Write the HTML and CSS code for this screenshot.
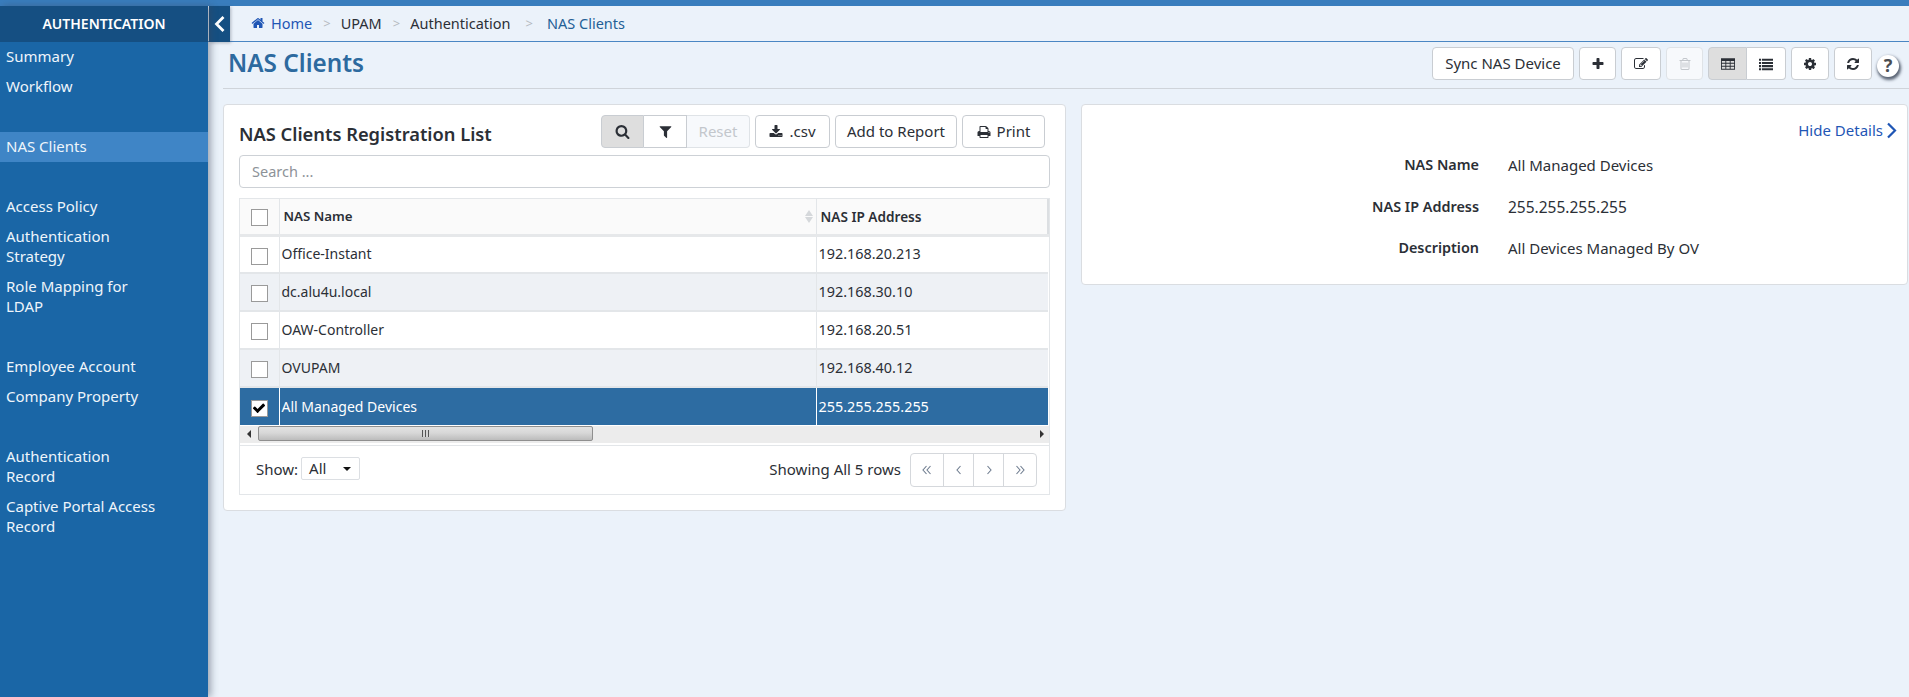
FILE: index.html
```html
<!DOCTYPE html>
<html lang="en">
<head>
<meta charset="utf-8">
<title>NAS Clients</title>
<link rel="stylesheet" href="styles.css">
</head>
<body>
<svg class="defs" width="0" height="0">
  <symbol id="i-home" viewBox="0 0 1792 1792"><path d="M1472 992v480q0 26-19 45t-45 19h-384v-384h-256v384h-384q-26 0-45-19t-19-45v-480q0-1 .5-3t.5-3l575-474 575 474q1 2 1 6zm223-69l-62 74q-8 9-21 11h-3q-13 0-21-7l-692-577-692 577q-12 8-24 7-13-2-21-11l-62-74q-8-10-7-23.5t11-21.5l719-599q32-26 76-26t76 26l244 204v-195q0-14 9-23t23-9h192q14 0 23 9t9 23v408l219 182q10 8 11 21.5t-7 23.5z"/></symbol>
  <symbol id="i-search" viewBox="0 0 1792 1792"><path d="M1216 832q0-185-131.5-316.5t-316.5-131.5-316.5 131.5-131.5 316.5 131.5 316.5 316.5 131.5 316.5-131.5 131.5-316.5zm512 832q0 52-38 90t-90 38q-54 0-90-38l-343-342q-179 124-399 124-143 0-273.5-55.5t-225-150-150-225-55.5-273.5 55.5-273.5 150-225 225-150 273.5-55.5 273.5 55.5 225 150 150 225 55.5 273.5q0 220-124 399l343 343q37 37 37 90z"/></symbol>
  <symbol id="i-filter" viewBox="0 0 1792 1792"><path d="M1595 295q17 41-14 70l-493 493v742q0 42-39 59-13 5-25 5-27 0-45-19l-256-256q-19-19-19-45v-486l-493-493q-31-29-14-70 17-39 59-39h1280q42 0 59 39z"/></symbol>
  <symbol id="i-plus" viewBox="0 0 1792 1792"><path d="M1600 736v192q0 40-28 68t-68 28h-416v416q0 40-28 68t-68 28h-192q-40 0-68-28t-28-68v-416h-416q-40 0-68-28t-28-68v-192q0-40 28-68t68-28h416v-416q0-40 28-68t68-28h192q40 0 68 28t28 68v416h416q40 0 68 28t28 68z"/></symbol>
  <symbol id="i-check" viewBox="0 0 1792 1792"><path d="M1671 566q0 40-28 68l-724 724-136 136q-28 28-68 28t-68-28l-136-136-362-362q-28-28-28-68t28-68l136-136q28-28 68-28t68 28l294 295 656-657q28-28 68-28t68 28l136 136q28 28 28 68z"/></symbol>
  <symbol id="i-cog" viewBox="0 0 1792 1792"><path d="M1152 896q0-106-75-181t-181-75-181 75-75 181 75 181 181 75 181-75 75-181zm512-109v222q0 12-8 23t-20 13l-185 28q-19 54-39 91 35 50 107 138 10 12 10 25t-9 23q-27 37-99 108t-94 71q-12 0-26-9l-138-108q-44 23-91 38-16 136-29 186-7 28-36 28h-222q-14 0-24.5-8.5t-11.5-21.5l-28-184q-49-16-90-37l-141 107q-10 9-25 9-14 0-25-11-126-114-165-168-7-10-7-23 0-12 8-23 15-21 51-66.5t54-70.5q-27-50-41-99l-183-27q-13-2-21-12.5t-8-23.5v-222q0-12 8-23t19-13l186-28q14-46 39-92-40-57-107-138-10-12-10-24 0-10 9-23 26-36 98.5-107.5t94.5-71.5q13 0 26 10l138 107q44-23 91-38 16-136 29-186 7-28 36-28h222q14 0 24.5 8.5t11.5 21.5l28 184q49 16 90 37l142-107q9-9 24-9 13 0 25 10 129 119 165 170 7 8 7 22 0 12-8 23-15 21-51 66.5t-54 70.5q26 50 41 98l183 28q13 2 21 12.5t8 23.5z"/></symbol>
  <symbol id="i-refresh" viewBox="0 0 1792 1792"><path d="M1639 1056q0 5-1 7-64 268-268 434.5t-478 166.5q-146 0-282.5-55t-243.5-157l-129 129q-19 19-45 19t-45-19-19-45v-448q0-26 19-45t45-19h448q26 0 45 19t19 45-19 45l-137 137q71 66 161 102t187 36q134 0 250-65t186-179q11-17 53-117 8-23 30-23h192q13 0 22.5 9.5t9.5 22.5zm25-800v448q0 26-19 45t-45 19h-448q-26 0-45-19t-19-45 19-45l138-138q-148-137-349-137-134 0-250 65t-186 179q-11 17-53 117-8 23-30 23h-199q-13 0-22.5-9.5t-9.5-22.5v-7q65-268 270-434.5t480-166.5q146 0 284 55.5t245 156.5l130-129q19-19 45-19t45 19 19 45z"/></symbol>
  <symbol id="i-download" viewBox="0 0 1792 1792"><path d="M1344 1344q0-26-19-45t-45-19-45 19-19 45 19 45 45 19 45-19 19-45zm256 0q0-26-19-45t-45-19-45 19-19 45 19 45 45 19 45-19 19-45zm128-224v320q0 40-28 68t-68 28h-1472q-40 0-68-28t-28-68v-320q0-40 28-68t68-28h465l135 136q58 56 136 56t136-56l136-136h464q40 0 68 28t28 68zm-325-569q17 41-14 70l-448 448q-18 19-45 19t-45-19l-448-448q-31-29-14-70 17-39 59-39h256v-448q0-26 19-45t45-19h256q26 0 45 19t19 45v448h256q42 0 59 39z"/></symbol>
  <symbol id="i-print" viewBox="0 0 1792 1792"><path d="M448 1536h896v-256h-896v256zm0-640h896v-384h-160q-40 0-68-28t-28-68v-160h-640v640zm1152 64q0-26-19-45t-45-19-45 19-19 45 19 45 45 19 45-19 19-45zm128 0v416q0 13-9.5 22.5t-22.5 9.5h-224v160q0 40-28 68t-68 28h-960q-40 0-68-28t-28-68v-160h-224q-13 0-22.5-9.5t-9.5-22.5v-416q0-79 56.5-135.5t135.5-56.5h64v-544q0-40 28-68t68-28h672q40 0 88 20t76 48l152 152q28 28 48 76t20 88v256h64q79 0 135.5 56.5t56.5 135.5z"/></symbol>
  <symbol id="i-edit" viewBox="0 0 1792 1792"><path d="M888 1184l116-116-152-152-116 116v56h96v96h56zm440-720q-16-16-33 1l-350 350q-17 17-1 33t33-1l350-350q17-17 1-33zm80 594v190q0 119-84.5 203.5t-203.5 84.5h-832q-119 0-203.5-84.5t-84.5-203.5v-832q0-119 84.5-203.5t203.5-84.5h832q63 0 117 25 15 7 18 23 3 17-9 29l-49 49q-14 14-32 8-23-6-45-6h-832q-66 0-113 47t-47 113v832q0 66 47 113t113 47h832q66 0 113-47t47-113v-126q0-13 9-22l64-64q15-15 35-7t20 29zm-96-738l288 288-672 672h-288v-288zm444 132l-92 92-288-288 92-92q28-28 68-28t68 28l152 152q28 28 28 68t-28 68z"/></symbol>
  <symbol id="i-trash" viewBox="0 0 1792 1792"><path d="M704 736v576q0 14-9 23t-23 9h-64q-14 0-23-9t-9-23v-576q0-14 9-23t23-9h64q14 0 23 9t9 23zm256 0v576q0 14-9 23t-23 9h-64q-14 0-23-9t-9-23v-576q0-14 9-23t23-9h64q14 0 23 9t9 23zm256 0v576q0 14-9 23t-23 9h-64q-14 0-23-9t-9-23v-576q0-14 9-23t23-9h64q14 0 23 9t9 23zm128 724v-948h-896v948q0 22 7 40.5t14.5 27 10.5 8.5h832q3 0 10.5-8.5t14.5-27 7-40.5zm-672-1076h448l-48-117q-7-9-17-11h-317q-10 2-17 11zm928 32v64q0 14-9 23t-23 9h-96v948q0 83-47 143.5t-113 60.5h-832q-66 0-113-59t-47-142v-952h-96q-14 0-23-9t-9-23v-64q0-14 9-23t23-9h309l70-167q15-37 54-63t79-26h320q40 0 79 26t54 63l70 167h309q14 0 23 9t9 23z"/></symbol>
  <symbol id="i-table" viewBox="0 0 16 16"><path fill-rule="evenodd" d="M0 1.5h16v13H0zM1 4.5v2.2h4v-2.2zm5 0v2.2h4v-2.2zm5 0v2.2h4v-2.2zM1 7.7v2.4h4V7.7zm5 0v2.4h4V7.7zm5 0v2.4h4V7.7zM1 11.1v2.4h4v-2.4zm5 0v2.4h4v-2.4zm5 0v2.4h4v-2.4z"/></symbol>
  <symbol id="i-list" viewBox="0 0 16 16"><path d="M0 2h2.4v2.4H0zM3.4 2H16v2.4H3.4zM0 5.6h2.4V8H0zM3.4 5.6H16V8H3.4zM0 9.2h2.4v2.4H0zM3.4 9.2H16v2.4H3.4zM0 12.8h2.4v2.4H0zM3.4 12.8H16v2.4H3.4z"/></symbol>
  <symbol id="i-first" viewBox="0 0 10 10"><path d="M4.5 1 1 5l3.5 4M8.5 1 5 5l3.5 4" fill="none" stroke="currentColor" stroke-width="1.1"/></symbol>
  <symbol id="i-prev" viewBox="0 0 10 10"><path d="M6.500 1 3 5l3.500 4" fill="none" stroke="currentColor" stroke-width="1.1"/></symbol>
  <symbol id="i-next" viewBox="0 0 10 10"><path d="M3.500 1 7 5 3.500 9" fill="none" stroke="currentColor" stroke-width="1.1"/></symbol>
  <symbol id="i-last" viewBox="0 0 10 10"><path d="M1.500 1 5 5 1.500 9M5.500 1 9 5 5.500 9" fill="none" stroke="currentColor" stroke-width="1.1"/></symbol>
</svg>

<div class="topbar"></div>
<div class="app">
  <aside class="sidebar">
    <h2 class="side-title">AUTHENTICATION</h2>
    <nav class="side-nav">
      <div class="side-group">
        <a class="side-item">Summary</a>
        <a class="side-item">Workflow</a>
      </div>
      <div class="side-group">
        <a class="side-item active">NAS Clients</a>
      </div>
      <div class="side-group">
        <a class="side-item">Access Policy</a>
        <a class="side-item">Authentication Strategy</a>
        <a class="side-item">Role Mapping for LDAP</a>
      </div>
      <div class="side-group">
        <a class="side-item">Employee Account</a>
        <a class="side-item">Company Property</a>
      </div>
      <div class="side-group">
        <a class="side-item">Authentication Record</a>
        <a class="side-item">Captive Portal Access Record</a>
      </div>
    </nav>
  </aside>

  <main class="main">
    <div class="crumbbar">
      <button class="collapse" aria-label="Collapse">
        <svg width="11" height="18" viewBox="0 0 11 18"><path d="M9.500 2 2.500 9l7 7" fill="none" stroke="#fff" stroke-width="2.800"/></svg>
      </button>
      <ol class="crumbs">
        <li class="crumb link"><svg class="ico ico-home"><use href="#i-home"/></svg>Home</li>
        <li class="sep">&gt;</li>
        <li class="crumb">UPAM</li>
        <li class="sep">&gt;</li>
        <li class="crumb">Authentication</li>
        <li class="sep sep-last">&gt;</li>
        <li class="crumb current">NAS Clients</li>
      </ol>
    </div>

    <header class="pagehead">
      <h1 class="pagetitle">NAS Clients</h1>
      <div class="toolbar">
        <button class="btn btn-text btn-sync">Sync NAS Device</button>
        <button class="btn btn-plus"><svg class="ico"><use href="#i-plus"/></svg></button>
        <button class="btn btn-edit"><svg class="ico"><use href="#i-edit"/></svg></button>
        <button class="btn btn-trash" disabled><svg class="ico"><use href="#i-trash"/></svg></button>
        <div class="btn-group">
          <button class="btn btn-view on"><svg class="ico ico-tbl"><use href="#i-table"/></svg></button>
          <button class="btn btn-view"><svg class="ico ico-tbl"><use href="#i-list"/></svg></button>
        </div>
        <button class="btn btn-gear"><svg class="ico"><use href="#i-cog"/></svg></button>
        <button class="btn btn-gear"><svg class="ico"><use href="#i-refresh"/></svg></button>
        <span class="help">?</span>
      </div>
    </header>

    <div class="content">
      <section class="card card-list">
        <div class="list-head">
          <h2 class="list-title">NAS Clients Registration List</h2>
          <div class="list-actions">
            <div class="btn-group">
              <button class="btn btn-s on"><svg class="ico ico-md"><use href="#i-search"/></svg></button>
              <button class="btn btn-s"><svg class="ico ico-md"><use href="#i-filter"/></svg></button>
              <button class="btn btn-text btn-reset" disabled>Reset</button>
            </div>
            <button class="btn btn-text btn-csv"><svg class="ico ico-lead"><use href="#i-download"/></svg>.csv</button>
            <button class="btn btn-text btn-report">Add to Report</button>
            <button class="btn btn-text btn-print"><svg class="ico ico-lead"><use href="#i-print"/></svg>Print</button>
          </div>
        </div>
        <input class="search" type="text" placeholder="Search ...">
        <div class="grid">
          <table class="tbl">
            <colgroup><col class="c0"><col class="c1"><col class="c2"></colgroup>
            <thead>
              <tr>
                <th class="cell-check"><span class="cb"></span></th>
                <th class="th-name">NAS Name<span class="sort"><i class="up"></i><i class="down"></i></span></th>
                <th class="th-ip">NAS IP Address</th>
              </tr>
            </thead>
            <tbody>
              <tr><td class="cell-check"><span class="cb"></span></td><td>Office-Instant</td><td class="ip">192.168.20.213</td></tr>
              <tr class="alt"><td class="cell-check"><span class="cb"></span></td><td>dc.alu4u.local</td><td class="ip">192.168.30.10</td></tr>
              <tr><td class="cell-check"><span class="cb"></span></td><td>OAW-Controller</td><td class="ip">192.168.20.51</td></tr>
              <tr class="alt"><td class="cell-check"><span class="cb"></span></td><td>OVUPAM</td><td class="ip">192.168.40.12</td></tr>
              <tr class="sel"><td class="cell-check"><span class="cb"><svg class="ico ico-check"><use href="#i-check"/></svg></span></td><td>All Managed Devices</td><td class="ip">255.255.255.255</td></tr>
            </tbody>
          </table>
          <div class="hscroll">
            <span class="arrow arrow-l"></span>
            <div class="track">
              <div class="thumb"><span class="grip"></span></div>
            </div>
            <span class="arrow arrow-r"></span>
          </div>
          <div class="grid-foot">
            <div class="show">
              <span>Show:</span>
              <span class="select">All<i class="caret"></i></span>
            </div>
            <div class="paging">
              <span class="rows">Showing All 5 rows</span>
              <div class="pager">
                <span class="pg pg-first"><svg class="ico-pg"><use href="#i-first"/></svg></span>
                <span class="pg"><svg class="ico-pg"><use href="#i-prev"/></svg></span>
                <span class="pg"><svg class="ico-pg"><use href="#i-next"/></svg></span>
                <span class="pg pg-last"><svg class="ico-pg"><use href="#i-last"/></svg></span>
              </div>
            </div>
          </div>
        </div>
      </section>

      <section class="card card-detail">
        <a class="hide-link">Hide Details
          <svg width="11" height="17" viewBox="0 0 11 17"><path d="M2 1.500 9 8.500l-7 7" fill="none" stroke="#1f56b5" stroke-width="2.200"/></svg>
        </a>
        <dl class="detail">
          <dt>NAS Name</dt><dd>All Managed Devices</dd>
          <dt>NAS IP Address</dt><dd class="num">255.255.255.255</dd>
          <dt>Description</dt><dd>All Devices Managed By OV</dd>
        </dl>
      </section>
    </div>
  </main>
</div>
</body>
</html>
```

FILE: styles.css
```css
* { box-sizing: border-box; }
html, body { margin: 0; height: 100%; overflow: hidden; }
body {
  font-family: "Noto Sans", "Open Sans", sans-serif;
  font-size: 15px;
  color: #2b2f36;
  background: #ebf2fa;
}
.defs { position: absolute; }
.topbar { height: 6px; background: #397dbd; }
.app { display: flex; height: 691px; }

.sidebar {
  width: 208px;
  flex: none;
  background: #1a66a6;
  color: #fff;
  box-shadow: 3px 0 7px rgba(60, 70, 90, .45);
  position: relative;
  z-index: 2;
}
.side-title {
  margin: 0;
  height: 36px;
  line-height: 36px;
  text-align: center;
  font-size: 14px;
  font-weight: 600;
  background: #154f82;
}
.side-group { margin-bottom: 30px; }
.side-item {
  display: block;
  padding: 4px 52px 6px 6px;
  line-height: 20px;
  color: #eef5fb;
}
.side-item.active { background: #3f85c6; }

.main { flex: 1; min-width: 0; }
.crumbbar {
  height: 36px;
  display: flex;
  border-bottom: 1px solid #4a86c3;
}
.collapse {
  width: 21px;
  height: 36px;
  margin-left: 1px;
  padding: 0;
  border: 0;
  background: #154f82;
  display: flex;
  align-items: center;
  justify-content: center;
  box-shadow: 1px 1px 3px rgba(60, 70, 90, .35);
}
.crumbs {
  display: flex;
  align-items: center;
  list-style: none;
  margin: 0;
  padding: 0 0 1px 21px;
  height: 35px;
  font-size: 14.500px;
}
.crumb { color: #2b2f36; }
.crumb.link { color: #1f56b5; display: flex; align-items: center; }
.crumb.current { color: #245f96; }
.sep { color: #b5bac0; font-size: 13px; margin: 0 10px 0 11px; }
.sep-last { margin: 0 14px 0 15px; }
.ico { width: 14px; height: 14px; fill: currentColor; display: block; flex: none; }
.ico-md { width: 15px; height: 15px; }
.ico-home { margin-right: 6px; }
.ico-lead { margin-top: 2px; }

.pagehead {
  height: 47px;
  margin-left: 15px;
  display: flex;
  align-items: flex-start;
  justify-content: space-between;
  border-bottom: 1px solid #cfd4da;
}
.pagetitle {
  margin: 3px 0 0;
  padding-left: 5px;
  font-size: 24.300px;
  line-height: 36px;
  font-weight: 600;
  color: #2d6a9f;
}
.toolbar {
  display: flex;
  align-items: flex-start;
  gap: 5px;
  margin: 5px 10px 0 0;
}
.btn {
  height: 33px;
  padding: 0;
  border: 1px solid #c9cdd2;
  border-radius: 4px;
  background: #fff;
  font: inherit;
  color: #2b2f36;
  display: inline-flex;
  align-items: center;
  justify-content: center;
}
.btn-text { padding-bottom: 2px; }
.btn[disabled] { background: #f7f9fc; color: #c3c7cc; border-color: #dfe3e7; }
.btn.on { background: #dedede; }
.btn-group { display: flex; }
.btn-group .btn:not(:first-child) { border-top-left-radius: 0; border-bottom-left-radius: 0; border-left: 0; }
.btn-group .btn:not(:last-child) { border-top-right-radius: 0; border-bottom-right-radius: 0; }
.btn-sync { width: 142px; }
.btn-plus { width: 37px; }
.btn-edit { width: 40px; }
.btn-trash { width: 37px; }
.btn-view { width: 39px; }
.btn-gear { width: 38px; }
.ico-tbl { width: 14px; height: 14px; }
.help {
  width: 22px;
  height: 22px;
  margin-top: 8px;
  border-radius: 50%;
  background: #fff;
  color: #4a4d52;
  font-weight: 700;
  font-size: 18px;
  line-height: 20px;
  text-align: center;
  box-shadow: 1px 2px 3px 1px rgba(30, 40, 60, .7);
}

.content {
  display: flex;
  align-items: flex-start;
  gap: 15px;
  margin-left: 15px;
  padding-top: 15px;
}
.card {
  background: #fff;
  border: 1px solid #dadde1;
  border-radius: 4px;
}
.card-list { width: 843px; height: 407px; padding: 10px 15px 0; }
.card-detail { width: 827px; height: 181px; padding: 15px 10px 0 0; }
.list-head { display: flex; justify-content: space-between; align-items: flex-start; height: 33px; }
.list-title { margin: 2px 0 0; font-size: 18.300px; font-weight: 600; line-height: 34px; }
.list-actions { display: flex; gap: 5px; padding-right: 5px; }
.btn-s { width: 43px; }
.btn-reset { width: 63px; }
.btn-csv { width: 75px; gap: 6px; }
.btn-report { width: 122px; }
.btn-print { width: 83px; gap: 6px; }
.search {
  display: block;
  width: 811px;
  height: 33px;
  margin-top: 7px;
  padding: 0 12px 2px;
  border: 1px solid #cdd1d6;
  border-radius: 4px;
  font: inherit;
  font-size: 14.500px;
  color: #2b2f36;
  outline: none;
}
.search::placeholder { color: #8d9298; opacity: 1; }

.grid { margin-top: 10px; width: 811px; border: 1px solid #e3e6e9; height: 297px; }
.tbl { width: 100%; border-collapse: collapse; table-layout: fixed; font-size: 14px; }
.c0 { width: 39px; }
.c1 { width: 537px; }
.tbl th, .tbl td { height: 38px; padding: 0 2px; text-align: left; border-bottom: 2px solid #e3e6e9; vertical-align: middle; }
.tbl td { padding-bottom: 1px; }
.tbl td.ip { font-size: 14.400px; }
.tbl td + td, .tbl th + th { border-left: 1px solid #e3e6e9; }
.tbl thead th { background: #fafafa; height: 36px; font-weight: 600; font-size: 13.300px; border-bottom: 3px solid #e6e8ea; }
.tbl .th-name { position: relative; padding-left: 4px; }
.tbl thead .th-ip { border-right: 2px solid #dcdfe2; padding-left: 4px; font-size: 13.600px; }
.tbl .cell-check { text-align: center; padding: 0; }
.tbl td.cell-check { padding-top: 1px; padding-bottom: 0; }
.tbl tr.alt td { background: #eef1f5; }
.tbl tr.sel td { background: #2d6ca2; color: #fff; border-bottom: 0; }
.tbl tr.sel td + td { border-left-color: #fff; }
.cb {
  display: inline-flex;
  width: 17px;
  height: 17px;
  border: 1px solid #9a9a9a;
  background: #fff;
  align-items: center;
  justify-content: center;
  vertical-align: middle;
}
.ico-check { width: 14px; height: 14px; color: #000; }
.sort { position: absolute; right: 3px; top: 11px; display: flex; flex-direction: column; gap: 1px; }
.sort i { width: 0; height: 0; border-left: 4px solid transparent; border-right: 4px solid transparent; }
.sort .up { border-bottom: 6px solid #d5d8db; }
.sort .down { border-top: 6px solid #d5d8db; }

.hscroll { height: 17px; margin-top: 1px; display: flex; align-items: flex-start; background: #ececec; }
.arrow { width: 0; height: 0; margin-top: 4px; border-top: 4px solid transparent; border-bottom: 4px solid transparent; flex: none; }
.arrow-l { border-right: 4px solid #333; margin-left: 7px; margin-right: 7px; }
.arrow-r { border-left: 4px solid #333; margin-left: 3px; margin-right: 5px; }
.track { flex: 1; height: 15px; }
.thumb {
  width: 335px;
  height: 15px;
  border: 1px solid #8f8f8f;
  border-radius: 2px;
  background: linear-gradient(#e2e2e2, #d8d8d8 45%, #bcbcbc);
  display: flex;
  align-items: center;
  justify-content: center;
}
.grip { width: 8px; height: 7px; background: repeating-linear-gradient(90deg, #555 0 1px, #d5d5d5 1px 3px); }

.grid-foot {
  margin-top: 2px;
  padding: 7px 12px 0 16px;
  height: 49px;
  border-top: 1px solid #e3e6e9;
  display: flex;
  justify-content: space-between;
  align-items: flex-start;
}
.show { display: flex; align-items: center; gap: 3px; margin-top: 4px; }
.select {
  width: 59px;
  height: 23px;
  padding-left: 7px;
  border: 1px solid #dcdfe3;
  border-radius: 2px;
  line-height: 21px;
  position: relative;
}
.caret {
  position: absolute;
  right: 8px;
  top: 9px;
  border-left: 4px solid transparent;
  border-right: 4px solid transparent;
  border-top: 4px solid #111;
}
.paging { display: flex; align-items: flex-start; gap: 9px; }
.rows { line-height: 32px; }
.pager { display: flex; height: 34px; border: 1px solid #d5d8dc; border-radius: 4px; }
.pg { width: 30px; display: flex; align-items: center; justify-content: center; color: #6f7d90; border-left: 1px solid #d5d8dc; }
.pg:first-child { border-left: 0; }
.pg-first { width: 32px; }
.pg-last { width: 33px; }
.ico-pg { width: 10px; height: 10px; display: block; }

.hide-link { display: flex; justify-content: flex-end; align-items: center; gap: 3px; color: #1f56b5; height: 20px; }
.detail {
  display: grid;
  grid-template-columns: 397px 1fr;
  column-gap: 29px;
  row-gap: 21.500px;
  margin: 15px 0 0;
  line-height: 20px;
}
.detail dt { text-align: right; font-weight: 600; font-size: 14.400px; }
.detail dd { margin: 0; }
.detail dd.num { font-size: 15.500px; }
```
